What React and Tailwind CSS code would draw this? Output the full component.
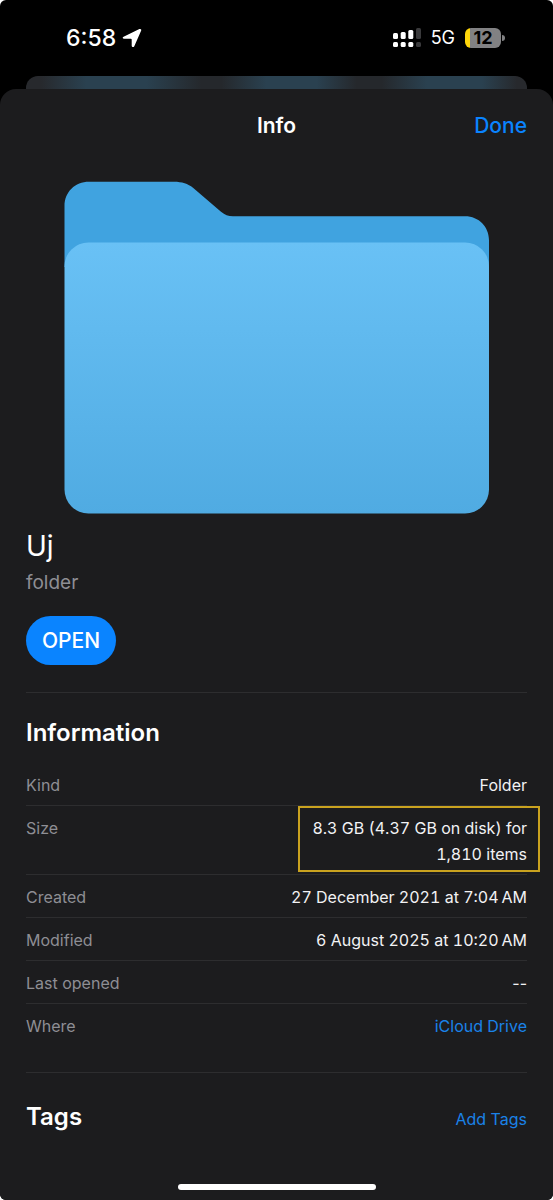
const details = [
  { label: 'Kind', value: 'Folder' },
  { label: 'Size', value: '8.3 GB (4.37 GB on disk) for 1,810 items', highlight: true },
  { label: 'Created', value: '27 December 2021 at 7:04\u202fAM' },
  { label: 'Modified', value: '6 August 2025 at 10:20\u202fAM' },
  { label: 'Last opened', value: '--', empty: true },
  { label: 'Where', value: 'iCloud Drive', link: true },
];

const LocationArrow = () => (
  <svg width="20" height="20" viewBox="0 0 20 20" fill="white" aria-hidden="true">
    <path d="M1.6 8.8 17.4 1.1c1.3-.6 2.3.3 1.7 1.6L12.3 18.2c-.6 1.4-2.6 1.1-2.6-.4v-6.2c0-.6-.3-.9-.9-.9H2.1C.5 10.7.2 9.5 1.6 8.8Z" />
  </svg>
);

const Signal = () => (
  <svg width="28" height="20" viewBox="0 0 28 20" aria-hidden="true">
    <g fill="white">
      <rect x="0" y="5" width="5" height="6" rx="1.5" />
      <rect x="7.7" y="4" width="5" height="7" rx="1.5" />
      <rect x="15.3" y="2" width="5" height="9" rx="1.5" />
      <rect x="0" y="14" width="5" height="5" rx="1.5" />
      <rect x="7.7" y="14" width="5" height="5" rx="1.5" />
      <rect x="15.3" y="14" width="5" height="5" rx="1.5" />
    </g>
    <g fill="#3a3a3c">
      <rect x="23" y="0" width="5" height="11" rx="1.5" />
      <rect x="23" y="14" width="5" height="5" rx="1.5" />
    </g>
  </svg>
);

const Battery = () => (
  <div className="flex items-center gap-px">
    <div className="flex h-5 w-9 items-center justify-center rounded-md bg-linear-to-r from-[#ffd60a] from-14% to-[#818183] to-14% text-lg font-bold text-black">
      12
    </div>
    <div className="h-1.5 w-[3px] rounded-r-full bg-[#818183]" />
  </div>
);

const StatusBar = () => (
  <div className="flex h-19 items-center justify-between pr-12 pl-[66px] text-white">
    <div className="flex items-center gap-[6px]">
      <span className="text-[23px] font-medium">6:58</span>
      <LocationArrow />
    </div>
    <div className="flex items-center gap-[10px]">
      <Signal />
      <span className="text-lg">5G</span>
      <Battery />
    </div>
  </div>
);

const FolderArt = () => (
  <svg className="block w-full" viewBox="0 0 425 333" role="img" aria-label="Folder">
    <defs>
      <linearGradient id="front" x1="0" y1="0" x2="0" y2="1">
        <stop offset="0" stopColor="#69c1f5" />
        <stop offset="1" stopColor="#50abe2" />
      </linearGradient>
    </defs>
    <path
      fill="#40a3e0"
      d="M.5 25C.5 11 11 .7 25 .7h85c8 0 14 2 19 6l28 24c4 3 7 4.6 12 4.6h232c14 0 24 10.7 24 24V86H.5Z"
    />
    <rect x=".5" y="61.5" width="424.5" height="271" rx="24" fill="url(#front)" />
  </svg>
);

const DetailRow = ({ label, value, highlight, link, empty }) => (
  <div className="flex justify-between border-b border-[#2d2d2f] pt-[9px] pb-[7px] leading-[26px] last:border-b-0">
    <dt className="text-[#8e8e94]">{label}</dt>
    <dd
      className={
        highlight
          ? 'relative w-[230px] text-right text-[#f2f2f4] tabular-nums'
          : empty
            ? 'text-right text-[#f2f2f4]'
            : 'text-right text-[#f2f2f4] tabular-nums'
      }
    >
      {link ? <a href="#where" className="text-[#1a82e8]">{value}</a> : value}
      {highlight && (
        <span className="pointer-events-none absolute -top-[9px] -right-[13px] -bottom-[5px] w-[242px] border-2 border-[#c9a21f]" />
      )}
    </dd>
  </div>
);

export default function App() {
  return (
    <div className="flex min-h-screen flex-col overflow-hidden rounded-md bg-black font-[Inter,sans-serif]">
      <StatusBar />
      {/* the sheet behind this one peeks out at the top */}
      <div className="mx-[26px] h-[13px] rounded-t-xl bg-[linear-gradient(90deg,#27292d_3%,#2a4150_12%,#2a4150_24%,#25282c_35%,#25282c_39%,#2a4150_48%,#2a4150_58%,#25282c_66%,#25282c_71%,#2a4150_80%,#2a4150_91%,#27292d_98%)]" />
      <main className="flex grow flex-col rounded-t-2xl bg-[#1c1c1e] px-[26px] pb-[10px] text-base">
        <header className="grid h-[74px] grid-cols-3 items-center text-[21px]">
          <h1 className="col-start-2 text-center font-semibold text-white">Info</h1>
          <button type="button" className="justify-self-end font-medium text-[#0a84ff]">Done</button>
        </header>

        <div className="mt-[18px] px-[38px]">
          <FolderArt />
        </div>

        <section className="border-b border-[#2d2d2f] pb-[27px]">
          <h2 className="mt-4 text-[28px] leading-8 text-white">Uj</h2>
          <p className="mt-[9px] text-[19px] leading-6 text-[#8e8e94]">folder</p>
          <button
            type="button"
            className="mt-[21px] h-[49px] rounded-full bg-[#0a84ff] px-4 text-[21px] font-medium text-white"
          >
            OPEN
          </button>
        </section>

        <section className="border-b border-[#2d2d2f] pt-6 pb-[26px]">
          <h2 className="text-2xl font-semibold text-white">Information</h2>
          <dl className="mt-[14px]">
            {details.map((item) => (
              <DetailRow key={item.label} {...item} />
            ))}
          </dl>
        </section>

        <section className="flex items-baseline justify-between pt-7">
          <h2 className="text-2xl font-semibold text-white">Tags</h2>
          <button type="button" className="text-[#1a82e8]">Add Tags</button>
        </section>

        <div className="mx-auto mt-auto h-1.5 w-[198px] rounded-full bg-white" />
      </main>
    </div>
  );
}
